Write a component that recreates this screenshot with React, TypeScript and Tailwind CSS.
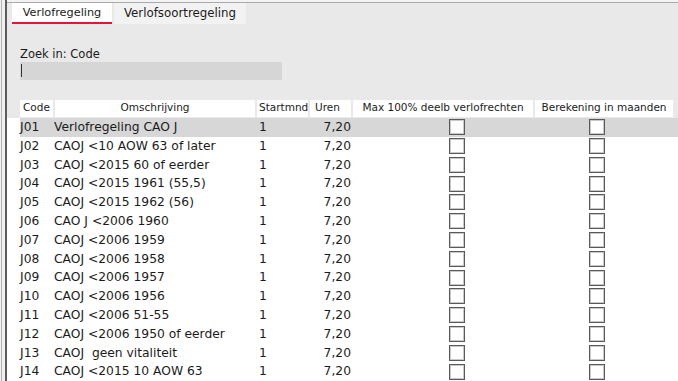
import React from "react"

interface Regel {
  code: string
  omschrijving: string
  startmnd: string
  uren: string
}

const regels: Regel[] = [
  { code: "J01", omschrijving: "Verlofregeling CAO J", startmnd: "1", uren: "7,20" },
  { code: "J02", omschrijving: "CAOJ <10 AOW 63 of later", startmnd: "1", uren: "7,20" },
  { code: "J03", omschrijving: "CAOJ <2015 60 of eerder", startmnd: "1", uren: "7,20" },
  { code: "J04", omschrijving: "CAOJ <2015 1961 (55,5)", startmnd: "1", uren: "7,20" },
  { code: "J05", omschrijving: "CAOJ <2015 1962 (56)", startmnd: "1", uren: "7,20" },
  { code: "J06", omschrijving: "CAO J <2006 1960", startmnd: "1", uren: "7,20" },
  { code: "J07", omschrijving: "CAOJ <2006 1959", startmnd: "1", uren: "7,20" },
  { code: "J08", omschrijving: "CAOJ <2006 1958", startmnd: "1", uren: "7,20" },
  { code: "J09", omschrijving: "CAOJ <2006 1957", startmnd: "1", uren: "7,20" },
  { code: "J10", omschrijving: "CAOJ <2006 1956", startmnd: "1", uren: "7,20" },
  { code: "J11", omschrijving: "CAOJ <2006 51-55", startmnd: "1", uren: "7,20" },
  { code: "J12", omschrijving: "CAOJ <2006 1950 of eerder", startmnd: "1", uren: "7,20" },
  { code: "J13", omschrijving: "CAOJ  geen vitaliteit", startmnd: "1", uren: "7,20" },
  { code: "J14", omschrijving: "CAOJ <2015 10 AOW 63", startmnd: "1", uren: "7,20" },
]

function Checkbox() {
  return <div className="w-4 h-4 border border-[#5a5a5a] bg-white shadow-[inset_0_0_0_1px_#c8c8c8]" />
}

export default function App() {
  return (
    <div
      className="w-[678px] h-[381px] overflow-hidden flex bg-[#e9e9e9] text-[#1b1b1b]"
      style={{ fontFamily: "'DejaVu Sans', Tahoma, sans-serif" }}
    >
      {/* left splitter */}
      <div className="w-[5px] h-full flex bg-[#f0f0f0]">
        <div className="w-px ml-px h-full bg-[#b5b5b5]" />
      </div>
      <div className="w-[2px] h-full bg-[#5c5c5c]" />

      <div className="flex-1 flex flex-col">
        <div className="h-[3px] border-b border-[#a9a9a9] bg-[#f3f3f3]" />

        {/* tabs */}
        <div className="flex pl-[5px] gap-[2px] h-[21px]">
          <div className="w-[100px] bg-white flex items-center justify-center text-[11.3px] relative">
            <span className="mt-[1px]">Verlofregeling</span>
            <div className="absolute left-0 right-0 bottom-0 h-[2px] bg-[#e8123c]" />
          </div>
          <div className="w-[132px] bg-[#f2f2f2] flex items-center justify-center text-[11.8px]">
            <span className="mt-[1px]">Verlofsoortregeling</span>
          </div>
        </div>

        {/* search */}
        <div className="pl-[13px] pt-[23px] text-[11.5px] leading-[14px]">Zoek in: Code</div>
        <div className="ml-[13px] mt-[1px] w-[262px] h-[18px] bg-[#d6d6d6] flex items-center pl-px">
          <div className="w-px h-[13px] bg-[#333]" />
        </div>

        {/* table */}
        <div className="mt-[20px] flex-1 bg-white">
          <div className="flex gap-[2px] h-[17px] bg-[#e9e9e9] pl-[13px] text-[10.5px] items-stretch">
            <div className="w-[33px] bg-white flex items-center pl-[3px]">Code</div>
            <div className="w-[200px] bg-white flex items-center justify-center">Omschrijving</div>
            <div className="w-[51px] bg-white flex items-center pl-[2px]">Startmnd</div>
            <div className="w-[41px] bg-white flex items-center pl-[5px]">Uren</div>
            <div className="w-[180px] bg-white flex items-center justify-center">Max 100% deelb verlofrechten</div>
            <div className="w-[138px] bg-white flex items-center justify-center">Berekening in maanden</div>
          </div>
          <div className="h-px bg-[#e9e9e9]" />
          <div className="pl-[13px] text-[12.3px]">
            {regels.map((r, i) => (
              <div
                key={r.code}
                className={`flex h-[18.8px] items-center ${i === 0 ? "bg-[#d7d7d7]" : ""}`}
              >
                <div className="w-[34px]">{r.code}</div>
                <div className="w-[203px] whitespace-pre">{r.omschrijving}</div>
                <div className="w-[52px] pl-[2px]">{r.startmnd}</div>
                <div className="w-[43px] text-right pr-px">{r.uren}</div>
                <div className="ml-[97px]">
                  <Checkbox />
                </div>
                <div className="ml-[124px]">
                  <Checkbox />
                </div>
              </div>
            ))}
          </div>
        </div>
      </div>
    </div>
  )
}
